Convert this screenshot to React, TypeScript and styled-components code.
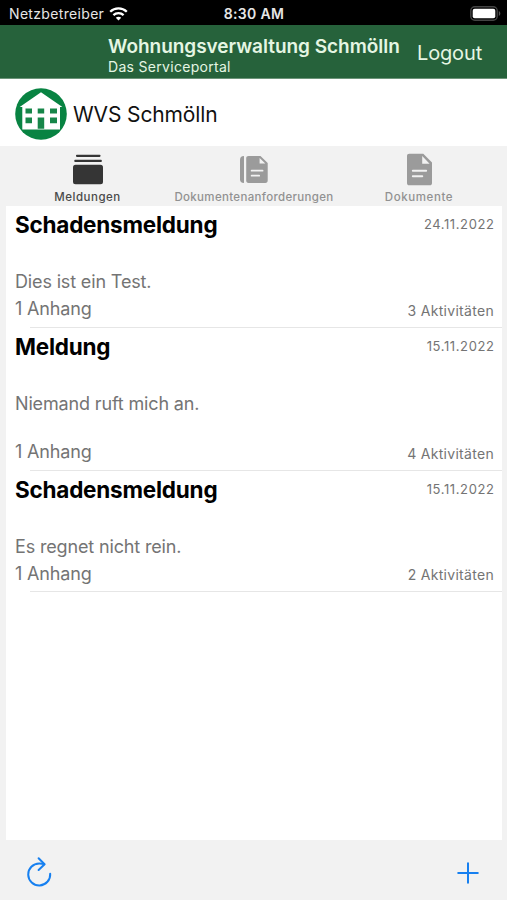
import React from "react";
import styled, { createGlobalStyle } from "styled-components";

const GlobalStyle = createGlobalStyle`
  * { box-sizing: border-box; }
  body {
    margin: 0;
    background: #f2f2f2;
    font-family: Inter, "Liberation Sans", sans-serif;
  }
  svg { display: block; flex: none; }
`;

const Screen = styled.div`
  display: flex;
  flex-direction: column;
  width: 507px;
  height: 900px;
  overflow: hidden;
  white-space: nowrap;
`;

const StatusBar = styled.div`
  display: grid;
  grid-template-columns: 1fr auto 1fr;
  align-items: center;
  height: 25px;
  padding: 2px 6px 0 9px;
  background: #000;
  color: #e6e6e6;
  font-size: 14px;
  line-height: 20px;
`;

const Carrier = styled.div`
  display: flex;
  align-items: center;
  gap: 5px;
  letter-spacing: 0.33px;
`;

const Clock = styled.div`
  margin-left: -2px;
  font-weight: 600;
  letter-spacing: 0.3px;
`;

const BatterySlot = styled.div`
  display: flex;
  justify-content: flex-end;
`;

const Header = styled.header`
  display: flex;
  align-items: flex-start;
  height: 54px;
  padding-left: 108px;
  background: #26623b;
  border-bottom: 1px solid #6c9479;
  color: #e5f6e3;
`;

const Heading = styled.div`
  width: 309px;
  padding-top: 10px;
`;

const PortalName = styled.h1`
  margin: 0;
  font-size: 19px;
  font-weight: 600;
  line-height: 23px;
  letter-spacing: -0.03px;
`;

const PortalHint = styled.div`
  font-size: 14px;
  line-height: 18px;
  letter-spacing: 0.3px;
`;

const LogoutButton = styled.button`
  margin: 0;
  padding: 15px 0 0;
  border: 0;
  background: none;
  color: inherit;
  font: 20px/26px Inter, sans-serif;
  letter-spacing: -0.15px;
`;

const Brand = styled.div`
  display: flex;
  align-items: center;
  gap: 6px;
  height: 67px;
  padding: 3px 0 0 15px;
  background: #fff;
  color: #111;
  font-size: 21px;
  letter-spacing: -0.13px;
`;

const Tabs = styled.nav`
  display: grid;
  grid-template-columns: 175px 158px 172px;
  height: 60px;
`;

const Tab = styled.div<{ $active?: boolean }>`
  display: flex;
  flex-direction: column;
  align-items: center;
  justify-content: space-between;
  padding-top: 6px;
  color: ${(p) => (p.$active ? "#353535" : "#9b9b9b")};
`;

const TabLabel = styled.span<{ $active?: boolean; $spacing: number }>`
  color: ${(p) => (p.$active ? "#4a4a4a" : "#919191")};
  font-size: 11.5px;
  font-weight: 500;
  line-height: 18px;
  letter-spacing: ${(p) => p.$spacing}px;
`;

const List = styled.main`
  flex: 1;
  margin: 0 5px 0 6px;
  background: #fff;
`;

const Entry = styled.article<{ $height: number }>`
  display: flex;
  flex-direction: column;
  height: ${(p) => p.$height}px;
  padding: 4px 8px 4px 9px;
  background: linear-gradient(#e6e6e6, #e6e6e6) 24px 100% / 100% 1px no-repeat;
  color: #747474;
`;

const EntryLine = styled.div`
  display: flex;
  align-items: center;
  justify-content: space-between;
  height: 28px;
`;

const EntryTitle = styled.h2`
  margin: 0;
  color: #000;
  font-size: 22.5px;
  font-weight: 700;
  letter-spacing: -0.22px;
`;

const Description = styled.p`
  margin: 30px 0 auto;
  font-size: 18px;
  line-height: 28px;
  letter-spacing: -0.15px;
`;

const Attachment = styled.span`
  font-size: 18px;
  line-height: 26px;
  letter-spacing: -0.15px;
  align-self: flex-start;
`;

const Meta = styled.span`
  font-size: 14px;
  letter-spacing: 0.3px;
`;

const DateText = styled.span`
  font-size: 13px;
  letter-spacing: 0.6px;
  margin-right: -0.5px;
  line-height: 28px;
`;

const Toolbar = styled.footer`
  display: flex;
  align-items: flex-start;
  justify-content: space-between;
  height: 60px;
  padding: 16px 28px 0 25px;
`;

const WifiIcon = () => (
  <svg width="19" height="14" viewBox="0 0 19 14" fill="none" stroke="#fff" strokeWidth="2.3">
    <path d="M1.2 4.8C5.8.3 13.2.3 17.8 4.8" />
    <path d="M4.4 8.1c2.9-2.7 7.3-2.7 10.2 0" />
    <path d="M9.5 13.5 6.8 10.8c1.5-1.3 3.9-1.3 5.4 0Z" fill="#fff" stroke="none" />
  </svg>
);

const BatteryIcon = () => (
  <svg width="31" height="15" viewBox="0 0 31 15">
    <rect x=".8" y=".8" width="26.4" height="13.4" rx="4" fill="none" stroke="#444" strokeWidth="1.4" />
    <rect x="2.7" y="2.7" width="22.6" height="9.6" rx="2" fill="#fff" />
    <path d="M28.8 5v5c2-.8 2-4.2 0-5Z" fill="#555" />
  </svg>
);

const HouseLogo = () => (
  <svg width="52" height="52" viewBox="0 0 52 52">
    <circle cx="26" cy="26" r="25.8" fill="#088342" />
    <path d="M26 4.2 47.4 19H45v22.6H7.3V19H4.7Z" fill="#fff" />
    <path
      d="M10.5 20.5h6.5v5h-6.5zM22.7 20.5h6.5v5h-6.5zM35 20.5h7v5h-7zM10.5 29.5h6.5v5.7h-6.5zM22.7 29.5h6.5v11.2h-6.5zM35 29.5h7v5.7h-7z"
      fill="#168649"
    />
  </svg>
);

const StackIcon = () => (
  <svg width="30" height="34" viewBox="0 0 30 34" fill="currentColor">
    <rect x="3" y="2.7" width="24.5" height="2.2" rx=".8" />
    <rect x="1.3" y="7.8" width="27.5" height="2.3" rx=".8" />
    <rect x="0" y="12.8" width="30" height="19.4" rx="2.5" />
  </svg>
);

const DocumentsIcon = () => (
  <svg width="28" height="34" viewBox="0 0 28 34" fill="currentColor">
    <path d="M4 4v27C1.2 31 0 29.6 0 27.3V7.7C0 5.4 1.2 4 4 4Z" />
    <path
      fillRule="evenodd"
      d="M8.6 4h11.9L27.7 11v17.6c0 1.6-.8 2.4-2.4 2.4H8.6c-1.6 0-2.4-.8-2.4-2.4V6.4C6.2 4.8 7 4 8.6 4Zm11 2v5.6h5.7Z"
    />
    <path d="M11.6 18.7h11M11.6 23.7h7.6" stroke="#f2f2f2" strokeWidth="1.7" strokeLinecap="round" />
  </svg>
);

const DocumentIcon = () => (
  <svg width="25" height="34" viewBox="0 0 25 34" fill="currentColor">
    <path
      fillRule="evenodd"
      d="M2.4 1.8h13.9L25 10.5v20.4c0 1.6-.8 2.4-2.4 2.4H2.4C.8 33.3 0 32.5 0 30.9V4.2c0-1.6.8-2.4 2.4-2.4ZM15.2 4v7.8h7.4Z"
    />
    <path d="M5.8 18.8h13.4M5.8 24.2h9.5" stroke="#f2f2f2" strokeWidth="1.9" strokeLinecap="round" />
  </svg>
);

const ReloadIcon = () => (
  <svg width="28" height="32" viewBox="0 0 28 32" fill="none" stroke="#1780f0" strokeWidth="2" strokeLinecap="round">
    <path d="M25.2 17.7A11 11 0 1 1 14.2 7.4c1.8 0 3.5.2 5 .7" />
    <path d="m13.6 2.3 6 5.9-6 5.8" strokeLinejoin="round" />
  </svg>
);

const PlusIcon = () => (
  <svg width="22" height="34" viewBox="0 0 22 34" stroke="#1780f0" strokeWidth="2" strokeLinecap="round">
    <path d="M1.2 17h19.6M11 7.2v19.6" />
  </svg>
);

const tabs = [
  { label: "Meldungen", icon: <StackIcon />, spacing: 0.5, active: true },
  { label: "Dokumentenanforderungen", icon: <DocumentsIcon />, spacing: 0.33 },
  { label: "Dokumente", icon: <DocumentIcon />, spacing: 0.6 },
];

const entries = [
  { title: "Schadensmeldung", date: "24.11.2022", text: "Dies ist ein Test.", activities: 3, height: 122 },
  { title: "Meldung", date: "15.11.2022", text: "Niemand ruft mich an.", activities: 4, height: 143 },
  { title: "Schadensmeldung", date: "15.11.2022", text: "Es regnet nicht rein.", activities: 2, height: 121 },
];

export default function App() {
  return (
    <>
      <GlobalStyle />
      <Screen>
        <StatusBar>
          <Carrier>
            Netzbetreiber
            <WifiIcon />
          </Carrier>
          <Clock>8:30 AM</Clock>
          <BatterySlot>
            <BatteryIcon />
          </BatterySlot>
        </StatusBar>
        <Header>
          <Heading>
            <PortalName>Wohnungsverwaltung Schmölln</PortalName>
            <PortalHint>Das Serviceportal</PortalHint>
          </Heading>
          <LogoutButton>Logout</LogoutButton>
        </Header>
        <Brand>
          <HouseLogo />
          WVS Schmölln
        </Brand>
        <Tabs>
          {tabs.map((tab) => (
            <Tab key={tab.label} $active={tab.active}>
              {tab.icon}
              <TabLabel $active={tab.active} $spacing={tab.spacing}>
                {tab.label}
              </TabLabel>
            </Tab>
          ))}
        </Tabs>
        <List>
          {entries.map((entry, index) => (
            <Entry key={index} $height={entry.height}>
              <EntryLine>
                <EntryTitle>{entry.title}</EntryTitle>
                <DateText>{entry.date}</DateText>
              </EntryLine>
              <Description>{entry.text}</Description>
              <EntryLine>
                <Attachment>1 Anhang</Attachment>
                <Meta>{entry.activities} Aktivitäten</Meta>
              </EntryLine>
            </Entry>
          ))}
        </List>
        <Toolbar>
          <ReloadIcon />
          <PlusIcon />
        </Toolbar>
      </Screen>
    </>
  );
}
